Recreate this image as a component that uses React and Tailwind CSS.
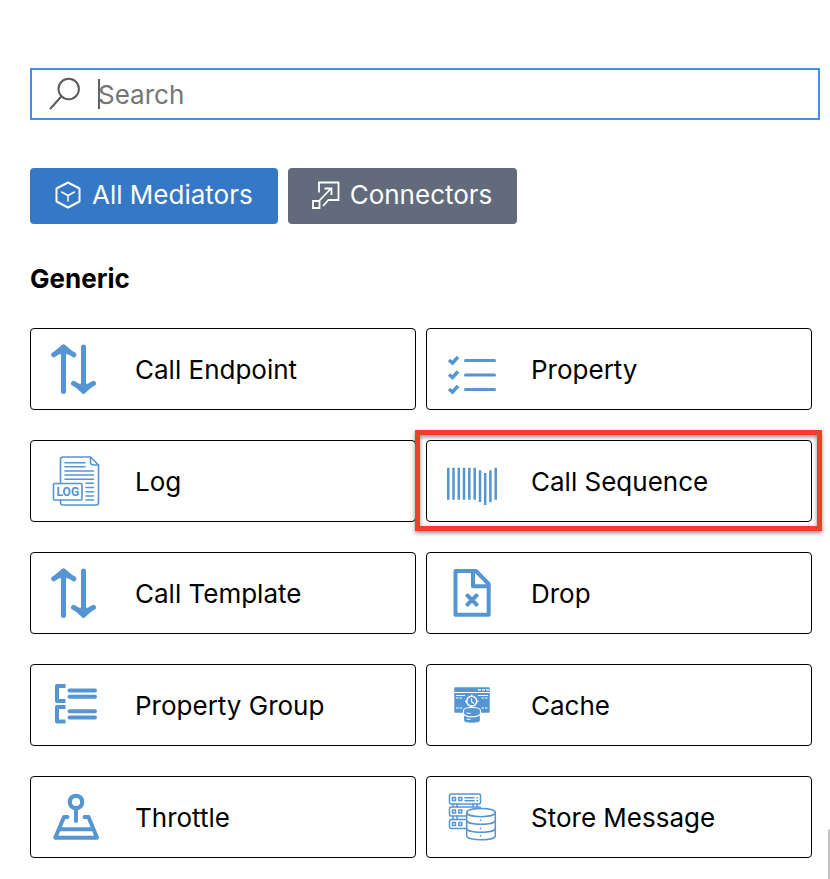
const stroke = {
  fill: "none",
  stroke: "currentColor",
  strokeLinecap: "round",
  strokeLinejoin: "round",
};

function Icon({ children, width = 4 }) {
  return (
    <svg viewBox="0 0 60 60" className="size-[60px] shrink-0 text-[#5595d2]" strokeWidth={width} {...stroke} aria-hidden="true">
      {children}
    </svg>
  );
}

function ArrowsIcon() {
  return (
    <Icon width={5}>
      <path d="M17.5 52.5V9M7.7 15.8C12 13.5 15 10 17.5 7.8C20 10 23 13.5 27.8 15.8" />
      <path d="M37.500 8V51.500M27.500 44.300C32 46.500 35 50 37.500 52.300C40 50 43 46.500 47.500 44.300" />
      <path fill="currentColor" strokeWidth="1" d="M12 14.500L17.500 9L23 14.500ZM32 45.500L37.500 51L43 45.500Z" />
    </Icon>
  );
}

function ChecklistIcon() {
  return (
    <Icon width={3}>
      <path d="M23.5 21.5H52.5M23.5 36H52.5M23.5 50.5H52.5" />
      <path strokeWidth="3.500" strokeLinecap="butt" strokeLinejoin="miter" d="M7 21L10.500 24L16 18M7 35.500L10.500 38.500L16 32.500M7 50L10.500 53L16 47" />
    </Icon>
  );
}

function LogIcon() {
  return (
    <Icon width={1.6}>
      <path d="M14.5 32V8.5Q14.5 6 17 6H44.5L52.5 14V51.5Q52.5 54 50 54H17Q14.5 54 14.5 51.5V49" />
      <path d="M44.5 6V11Q44.5 14 47.5 14H52.5" />
      <path d="M19 11.7H39M19 15.7H39M19 20H47.5M19 24H47.5M19 28.3H47.5M40 32.3H47.5M40 36.5H47.5M40 40.7H47.5M40 45H47.5M40 49H47.5" />
      <rect x="7.5" y="32.5" width="28.5" height="16.5" rx="1" />
      <text x="21.8" y="45" textAnchor="middle" fill="currentColor" stroke="none" className="font-['Roboto',sans-serif] text-[12px] font-bold">LOG</text>
    </Icon>
  );
}

function SequenceIcon() {
  return (
    <Icon width={2.5}>
      <path strokeLinecap="butt" d="M6.3 16.7V48.7M11.5 16.7V48.7M16.8 16.7V48.7M22 16.7V48.7M27.3 16.7V48.7M32.7 16.7V48.7M38 19.3V51M43.2 22V54M48.4 19.3V51M53.7 16.7V48.7" />
    </Icon>
  );
}

function DropIcon() {
  return (
    <Icon>
      <path d="M13.500 8H34L46.700 21V51.700H13.500Z" />
      <path d="M31 8V23.300H46.700" />
      <path d="M25.500 32.500L34.500 41.500M34.500 32.500L25.500 41.500" />
    </Icon>
  );
}

function GroupIcon() {
  return (
    <Icon>
      <path strokeLinecap="butt" d="M19.500 11H11V26H19.500M19.500 32H11V46.500H19.500" />
      <path d="M23.500 15.500H49M23.500 21.700H49M23.500 36.300H49M23.500 42.500H49" />
    </Icon>
  );
}

function CacheIcon() {
  return (
    <Icon width={1.2}>
      <g fill="currentColor" stroke="none">
        <path d="M13.3 12.3H46.7Q47.7 12.3 47.7 13.3V17H12.3V13.3Q12.3 12.3 13.3 12.3Z" />
        <path d="M12.3 18H47.7V36.7Q47.7 37.7 46.7 37.7H13.3Q12.3 37.7 12.3 36.7Z" />
      </g>
      <g stroke="white" strokeLinecap="butt">
        <path strokeDasharray="3 1" d="M36 14.900H47" />
        <path d="M14 20.500H23M36 20.500H46" />
        <path strokeDasharray="2.500 1" d="M14 23H20M39.500 23H46M14 33H20M39.500 33H46" />
        <circle cx="29.700" cy="26.300" r="5" strokeWidth="1.500" />
        <path d="M29.700 19.500V22M29.700 30.500V32M23 26.300H25M34.500 26.300H36.500M29.500 23.500V26.700L32 28.500" />
      </g>
      <path fill="currentColor" stroke="white" d="M21.500 35.500C21.500 31.500 38.500 31.500 38.500 35.500V45.500C38.500 49.300 21.500 49.300 21.500 45.500Z" />
      <path stroke="white" d="M21.500 39C23.500 42.700 36.500 42.700 38.500 39M25 38L28 38.500M25 44L28 44.500" />
    </Icon>
  );
}

function ThrottleIcon() {
  return (
    <Icon>
      <circle cx="30" cy="15" r="6.200" strokeWidth="4.300" />
      <path d="M30 22V34M21.500 30H18L9.200 50.700H51L42.500 30H38.500M14 42.300H46.500" />
    </Icon>
  );
}

function StoreIcon() {
  return (
    <Icon width={1.5}>
      <path d="M24 29H9Q7.500 29 7.500 27.500V21.500Q7.500 20 9 20H37Q38.500 20 38.500 21M24 41.500H9Q7.500 41.500 7.500 40V34Q7.500 32.500 9 32.500H24" />
      <rect x="7.500" y="7" width="31" height="10" rx="1.500" />
      <path d="M11 17V20M15 17V20M31 17V20M35 17V20M11 29V32.500M15 29V32.500" />
      <path d="M10.500 10.500H13.500V13.500H10.500ZM16.800 10.500H19.800V13.500H16.800ZM10.500 23H13.500V26H10.500ZM16.800 23H19.800V26H16.800ZM10.500 35.500H13.500V38.500H10.500ZM16.800 35.500H19.800V38.500H16.800Z" />
      <path d="M23 10.700H32M23 13.800H32M35 10.700H35.500M35 13.800H35.500" />
      <path fill="white" d="M24.700 25.500C24.700 20 53.300 20 53.300 25.500V49C53.300 54 24.700 54 24.700 49Z" />
      <path d="M24.700 25.500C24.700 31 53.300 31 53.300 25.500M24.700 33.500C24.700 38.500 53.300 38.500 53.300 33.500M24.700 41.500C24.700 46.500 53.300 46.500 53.300 41.500M38.500 33V33.300M38.500 41.200V41.500M38.500 48.700V49" />
    </Icon>
  );
}

const mediators = [
  { name: "Call Endpoint", Glyph: ArrowsIcon },
  { name: "Property", Glyph: ChecklistIcon },
  { name: "Log", Glyph: LogIcon },
  { name: "Call Sequence", Glyph: SequenceIcon, highlighted: true },
  { name: "Call Template", Glyph: ArrowsIcon },
  { name: "Drop", Glyph: DropIcon },
  { name: "Property Group", Glyph: GroupIcon },
  { name: "Cache", Glyph: CacheIcon },
  { name: "Throttle", Glyph: ThrottleIcon },
  { name: "Store Message", Glyph: StoreIcon },
];

function MediatorCard({ name, Glyph, highlighted }) {
  return (
    <button type="button" className="relative flex h-[82px] items-center gap-[29px] rounded-[4px] border border-black bg-white pl-[15px] text-left text-black">
      <Glyph />
      <span className="pt-[2px]">{name}</span>
      {highlighted && (
        <span className="pointer-events-none absolute -top-[11px] -right-[11px] -bottom-[10px] -left-[12px] z-10 border-[5px] border-[#ee4025] drop-shadow-[0_2px_2px_rgba(0,0,0,0.45)]" />
      )}
    </button>
  );
}

export default function App() {
  return (
    <main className="relative overflow-hidden bg-white pt-[68px] pr-[10px] pb-[21px] pl-[30px] font-['Inter','Liberation_Sans',sans-serif] text-[26px] leading-[32px]">
      <label className="relative flex h-[52px] items-center border-2 border-[#4190e6] bg-white pl-[16px]">
        <svg viewBox="0 0 34 34" className="mr-[16px] size-[34px] shrink-0 text-[#5c5c5c]" strokeWidth="2" {...stroke} aria-hidden="true">
          <circle cx="20.7" cy="12" r="10.2" />
          <path d="M13.3 19.5L2.5 31.5" />
        </svg>
        <span className="absolute left-[66px] h-[30px] w-[2px] bg-[#616161]" />
        <input type="text" aria-label="Search" placeholder="Search" className="min-w-0 flex-1 bg-transparent pt-[2px] outline-none placeholder:text-[#757575]" />
      </label>

      <div className="mt-[48px] flex gap-[10px] text-white">
        <button type="button" className="flex h-[56px] items-center gap-[10px] rounded-[4px] bg-[#3578c6] pr-[25px] pb-[2px] pl-[24px]">
          <svg viewBox="0 0 28 28" className="size-[28px] shrink-0" strokeWidth="2" {...stroke} aria-hidden="true">
            <path d="M14 1.500L25.500 7.500V20.500L14 26.500L2.500 20.500V7.500Z" />
            <path strokeWidth="1.500" d="M7.500 11L14 14.500L20.500 11M14 14.500V20" />
          </svg>
          All Mediators
        </button>
        <button type="button" className="flex h-[56px] items-center gap-[10px] rounded-[4px] bg-[#616b7b] pr-[25px] pb-[2px] pl-[24px]">
          <svg viewBox="0 0 28 28" className="size-[28px] shrink-0" strokeWidth="1.800" {...stroke} strokeLinecap="butt" strokeLinejoin="miter" aria-hidden="true">
            <path d="M7 11.500V1.500H26.500V19H16.500L11 25" />
            <path d="M1 20H7.500V27H1ZM7 20L19 7.500M12.500 7.500H19.500V14" />
          </svg>
          Connectors
        </button>
      </div>

      <h2 className="mt-[39px] font-bold">Generic</h2>

      <div className="mt-[33px] mr-[8px] grid grid-cols-2 gap-x-[10px] gap-y-[30px]">
        {mediators.map((mediator) => (
          <MediatorCard key={mediator.name} {...mediator} />
        ))}
      </div>

      <span className="absolute right-0 bottom-0 h-[50px] w-[2px] rounded-tl-[2px] bg-[#c1c1c1]" />
    </main>
  );
}
